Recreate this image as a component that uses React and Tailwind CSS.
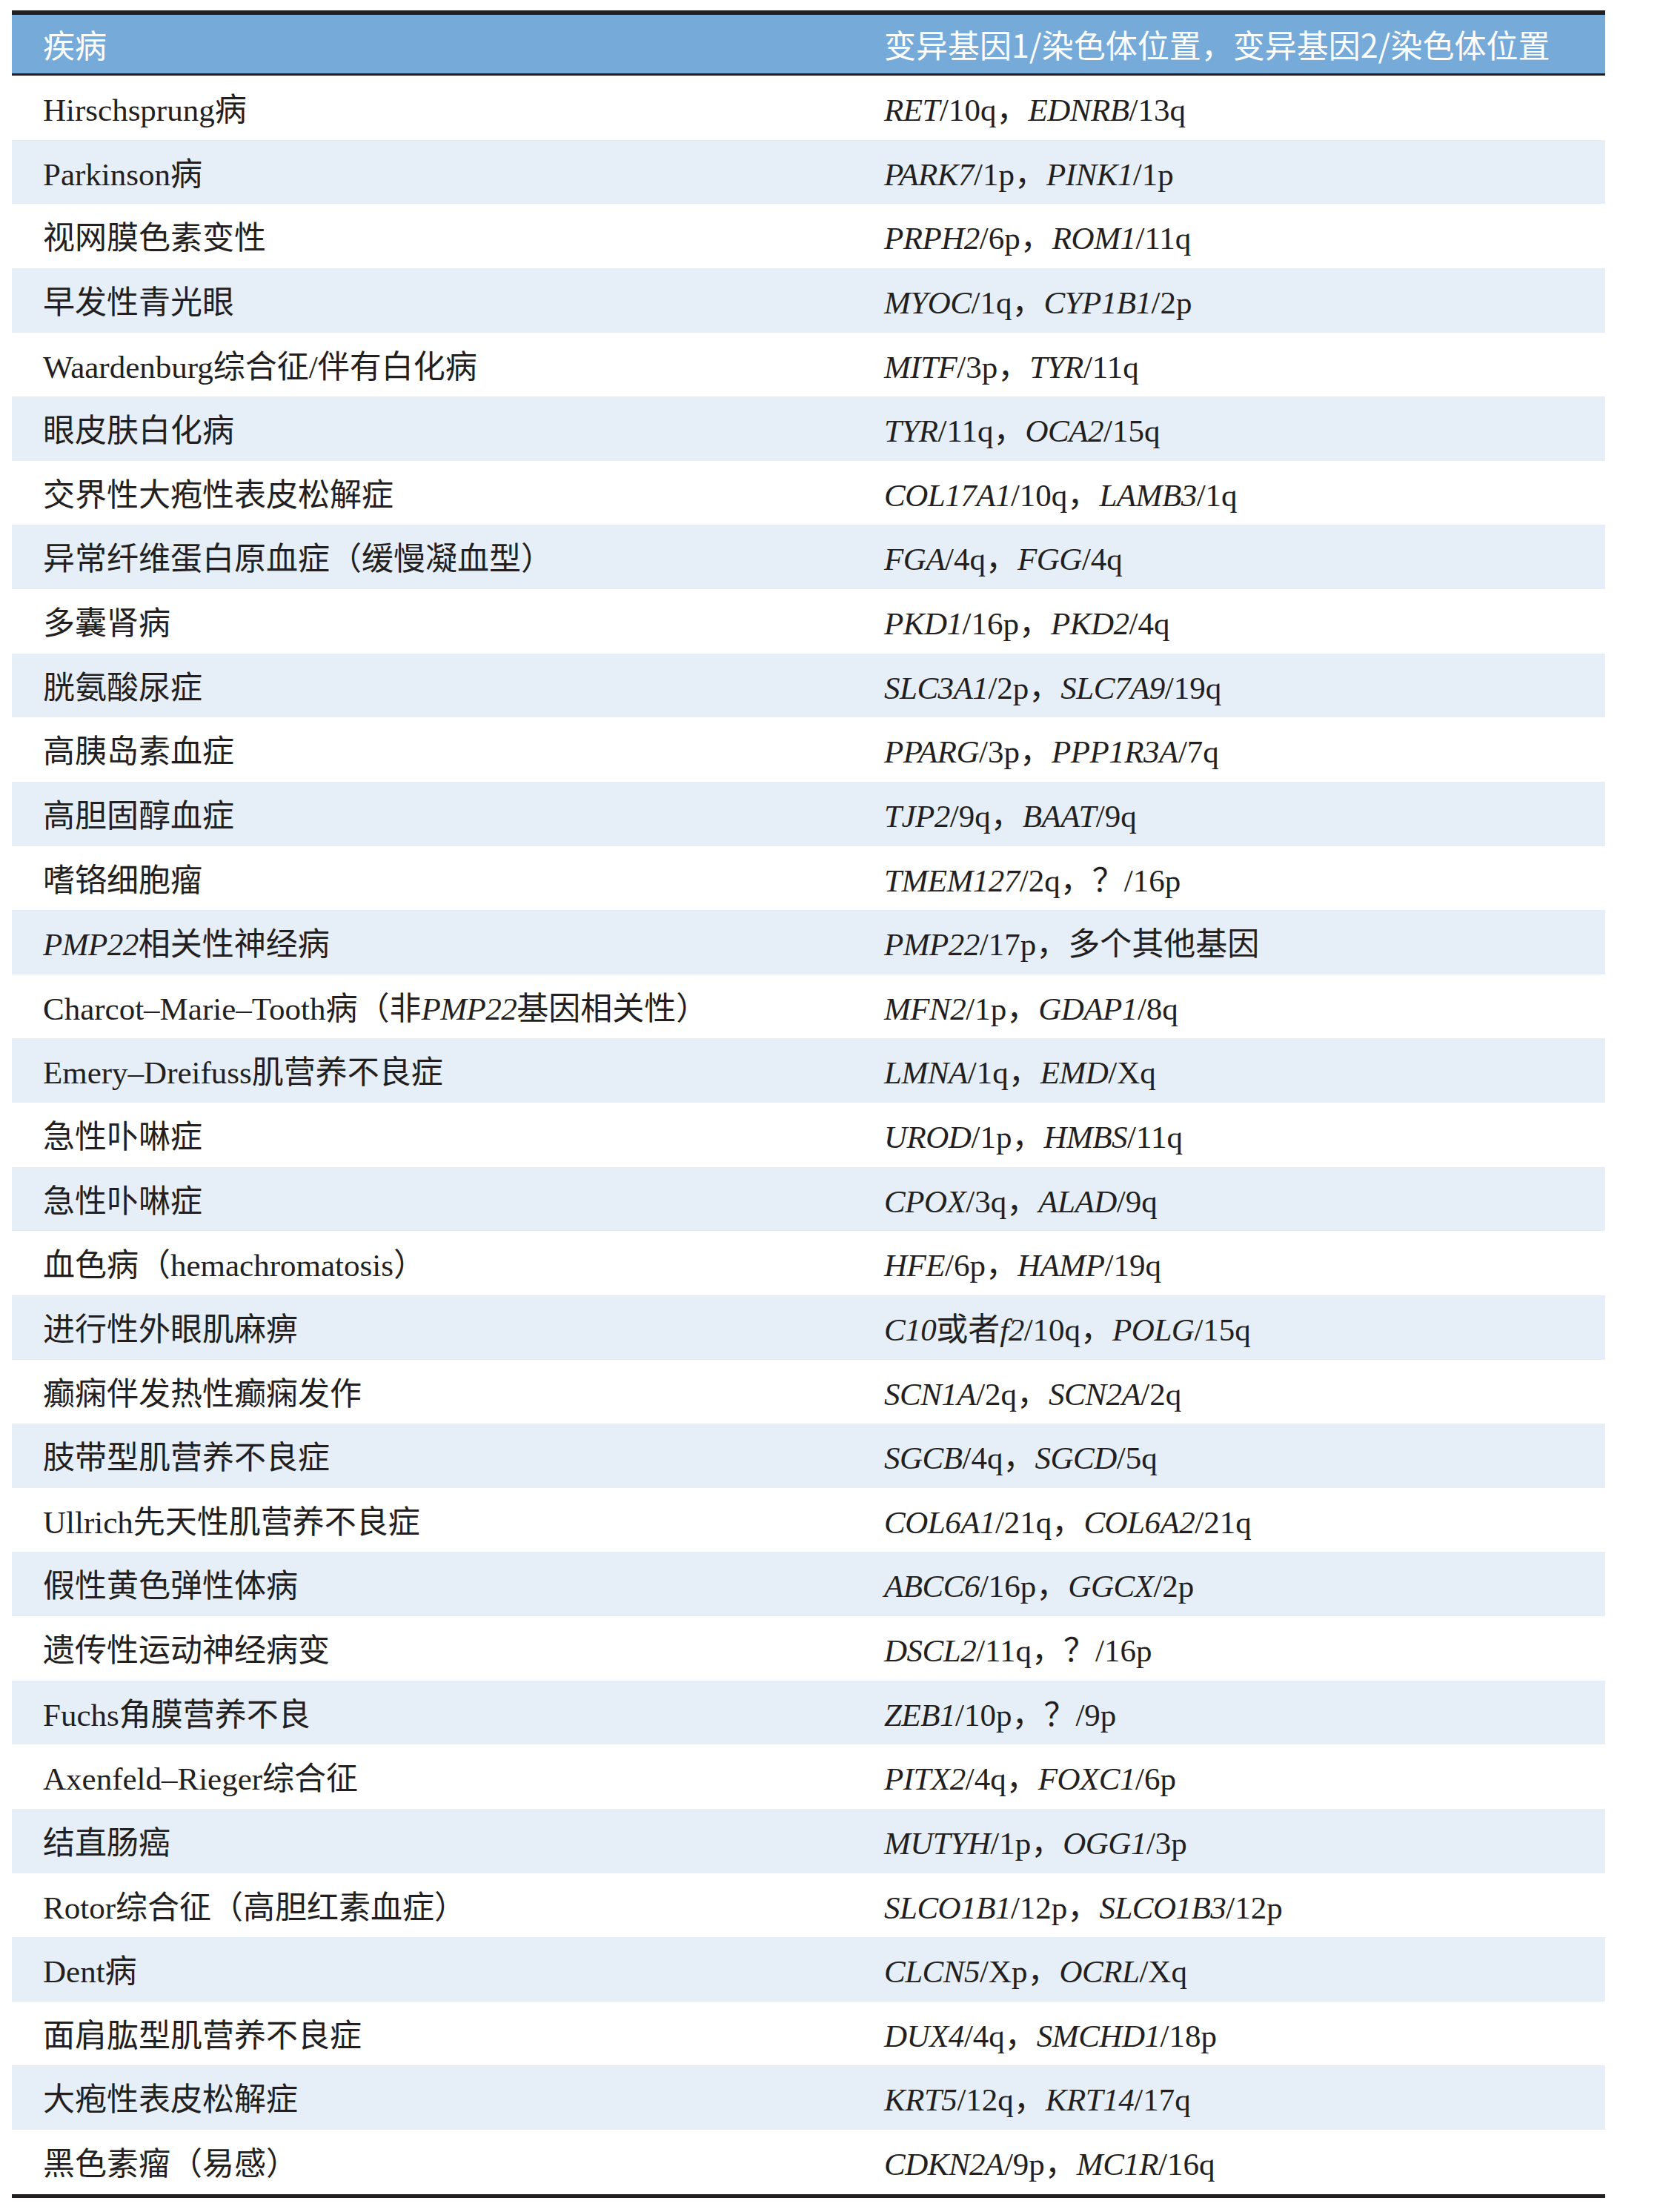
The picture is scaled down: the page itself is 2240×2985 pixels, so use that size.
import React from "react";

const rows = [
  ["Hirschsprung病", "*RET*/10q，*EDNRB*/13q"],
  ["Parkinson病", "*PARK7*/1p，*PINK1*/1p"],
  ["视网膜色素变性", "*PRPH2*/6p，*ROM1*/11q"],
  ["早发性青光眼", "*MYOC*/1q，*CYP1B1*/2p"],
  ["Waardenburg综合征/伴有白化病", "*MITF*/3p，*TYR*/11q"],
  ["眼皮肤白化病", "*TYR*/11q，*OCA2*/15q"],
  ["交界性大疱性表皮松解症", "*COL17A1*/10q，*LAMB3*/1q"],
  ["异常纤维蛋白原血症（缓慢凝血型）", "*FGA*/4q，*FGG*/4q"],
  ["多囊肾病", "*PKD1*/16p，*PKD2*/4q"],
  ["胱氨酸尿症", "*SLC3A1*/2p，*SLC7A9*/19q"],
  ["高胰岛素血症", "*PPARG*/3p，*PPP1R3A*/7q"],
  ["高胆固醇血症", "*TJP2*/9q，*BAAT*/9q"],
  ["嗜铬细胞瘤", "*TMEM127*/2q，？/16p"],
  ["*PMP22*相关性神经病", "*PMP22*/17p，多个其他基因"],
  ["Charcot–Marie–Tooth病（非*PMP22*基因相关性）", "*MFN2*/1p，*GDAP1*/8q"],
  ["Emery–Dreifuss肌营养不良症", "*LMNA*/1q，*EMD*/Xq"],
  ["急性卟啉症", "*UROD*/1p，*HMBS*/11q"],
  ["急性卟啉症", "*CPOX*/3q，*ALAD*/9q"],
  ["血色病（hemachromatosis）", "*HFE*/6p，*HAMP*/19q"],
  ["进行性外眼肌麻痹", "*C10*或者*f2*/10q，*POLG*/15q"],
  ["癫痫伴发热性癫痫发作", "*SCN1A*/2q，*SCN2A*/2q"],
  ["肢带型肌营养不良症", "*SGCB*/4q，*SGCD*/5q"],
  ["Ullrich先天性肌营养不良症", "*COL6A1*/21q，*COL6A2*/21q"],
  ["假性黄色弹性体病", "*ABCC6*/16p，*GGCX*/2p"],
  ["遗传性运动神经病变", "*DSCL2*/11q，？/16p"],
  ["Fuchs角膜营养不良", "*ZEB1*/10p，？/9p"],
  ["Axenfeld–Rieger综合征", "*PITX2*/4q，*FOXC1*/6p"],
  ["结直肠癌", "*MUTYH*/1p，*OGG1*/3p"],
  ["Rotor综合征（高胆红素血症）", "*SLCO1B1*/12p，*SLCO1B3*/12p"],
  ["Dent病", "*CLCN5*/Xp，*OCRL*/Xq"],
  ["面肩肱型肌营养不良症", "*DUX4*/4q，*SMCHD1*/18p"],
  ["大疱性表皮松解症", "*KRT5*/12q，*KRT14*/17q"],
  ["黑色素瘤（易感）", "*CDKN2A*/9p，*MC1R*/16q"],
];

// *text* = italic gene symbol
function Rich({ text }) {
  return text.split("*").map((part, i) =>
    i % 2 ? (
      <i key={i} className="tracking-[-0.5px]">
        {part}
      </i>
    ) : (
      <span key={i}>{part}</span>
    )
  );
}

export default function App() {
  return (
    <div className="w-[2240px] h-[2985px] bg-white pt-[14px] pl-[16px]">
      <div className="w-[2150px] border-t-[6px] border-b-[5px] border-[#231f20]">
        <div className="flex h-[82px] items-center bg-[#76abd9] border-b-[3px] border-[#231f20] text-white text-[43px] font-['Noto_Sans_CJK_SC',sans-serif]">
          <div className="w-[1135px] pl-[42px]">疾病</div>
          <div className="pl-[42px]">变异基因1/染色体位置，变异基因2/染色体位置</div>
        </div>
        {rows.map(([d, g], i) => (
          <div
            key={i}
            className={`flex h-[86.63px] items-center pt-[8px] text-[43px] text-[#231f20] font-['Liberation_Serif','Noto_Sans_CJK_SC',serif] ${
              i % 2 ? "bg-[#e6eff8]" : "bg-white"
            }`}
          >
            <div className="w-[1135px] pl-[42px] whitespace-nowrap">
              <Rich text={d} />
            </div>
            <div className="pl-[42px] whitespace-nowrap">
              <Rich text={g} />
            </div>
          </div>
        ))}
      </div>
    </div>
  );
}
